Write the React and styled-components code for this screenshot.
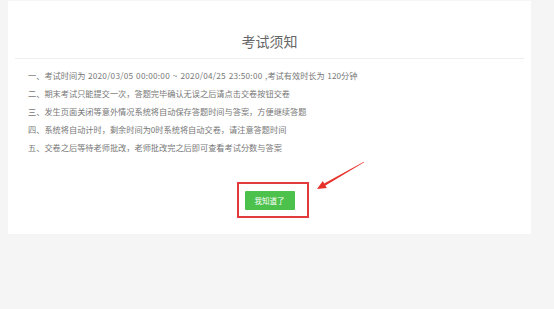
import React from 'react'
import styled, { createGlobalStyle } from 'styled-components'

const GlobalStyle = createGlobalStyle`
	html, body {
		margin: 0;
		padding: 0;
		background: #f5f5f5;
		font-family: "Noto Sans CJK SC", "Noto Sans", sans-serif;
	}
`

const Page = styled.div`
	width: 554px;
	height: 309px;
	padding: 1px 23px 0 8px;
	box-sizing: border-box;
`

const Card = styled.div`
	background: #fff;
	height: 233px;
	box-sizing: border-box;
	display: flex;
	flex-direction: column;
`

const Title = styled.h2`
	margin: 0 7px;
	padding: 30px 0 7px;
	border-bottom: 1px solid #eeeeee;
	text-align: center;
	font-size: 14px;
	line-height: 20px;
	font-weight: 400;
	color: #666;
`

const List = styled.ul`
	list-style: none;
	margin: 0;
	padding: 7px 20px 0;
`

const Item = styled.li`
	font-size: 8.2px;
	line-height: 18px;
	word-spacing: 0.8px;
	color: #777;
	white-space: nowrap;
`

// exam time range, set a little looser than the text round it
const Stamp = styled.span`
	letter-spacing: 0.25px;
`

const ButtonRow = styled.div`
	display: flex;
	justify-content: center;
	margin-top: 26px;
`

// red annotation box around the button
const Frame = styled.div`
	position: relative;
	margin-left: 6px;
	padding: 7px 12px 6px 6px;
	border: 2px solid #e23b3b;
	display: flex;
`

const Arrow = styled.svg`
	position: absolute;
	left: 76px;
	top: -24px;
	overflow: visible;
`

const Button = styled.button`
	width: 50px;
	height: 19px;
	padding: 0;
	border: none;
	border-radius: 1px;
	background: #4cc14c;
	color: #fff;
	font-family: inherit;
	font-size: 7.5px;
	line-height: 19px;
`

const start = '2020/03/05 00:00:00'
const end = '2020/04/25 23:50:00'

const rules = [
	'二、期末考试只能提交一次，答题完毕确认无误之后请点击交卷按钮交卷',
	'三、发生页面关闭等意外情况系统将自动保存答题时间与答案，方便继续答题',
	'四、系统将自动计时，剩余时间为0时系统将自动交卷，请注意答题时间',
	'五、交卷之后等待老师批改，老师批改完之后即可查看考试分数与答案',
]

export default function App() {
	return (
		<Page>
			<GlobalStyle />
			<Card>
				<Title>考试须知</Title>
				<List>
					<Item>
						一、考试时间为 <Stamp>{start} ~ {end}</Stamp> ,考试有效时长为 120分钟
					</Item>
					{rules.map(r => (
						<Item key={r}>{r}</Item>
					))}
				</List>
				<ButtonRow>
					<Frame>
						<Button>我知道了</Button>
						<Arrow width="52" height="34" viewBox="0 0 52 34">
							<polygon
								points="49.15,2.26 10.4,25.5 11.8,28 2,29 7.8,21 9.2,23.5 48.85,1.74"
								fill="#e8302a"
							/>
						</Arrow>
					</Frame>
				</ButtonRow>
			</Card>
		</Page>
	)
}
